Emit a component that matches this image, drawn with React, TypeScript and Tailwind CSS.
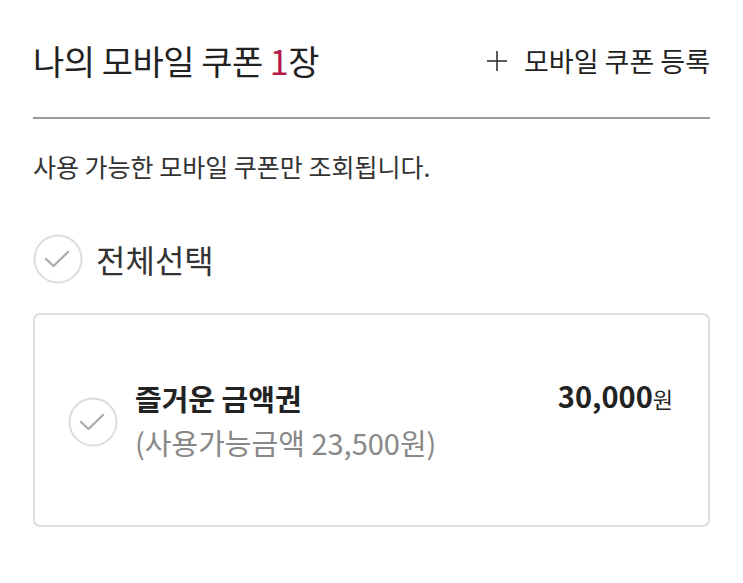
import React from "react";

const font = { fontFamily: '"Noto Sans CJK KR", "Noto Sans", sans-serif' };

function CheckCircle() {
  return (
    <svg width="50" height="50" viewBox="0 0 50 50" className="shrink-0">
      <circle cx="25" cy="25" r="23.5" fill="white" stroke="#dddddd" strokeWidth="2" />
      <polyline points="13,25 20.5,32 35,18" fill="none" stroke="#aaaaaa" strokeWidth="2.2" strokeLinecap="round" strokeLinejoin="round" />
    </svg>
  );
}

export default function App() {
  return (
    <div className="w-[743px] h-[583px] bg-white px-[33px] overflow-hidden" style={font}>
      <div className="mt-[42px] h-[38px] flex items-center justify-between">
        <div className="text-[34px] leading-[38px] text-[#222] tracking-[-0.5px] whitespace-nowrap">
          나의 모바일 쿠폰 <span className="text-[#b8174a]">1</span>장
        </div>
        <div className="flex items-center text-[27px] leading-[38px] text-[#222] whitespace-nowrap">
          <svg width="22" height="22" viewBox="0 0 22 22" className="mr-[16px]">
            <line x1="11" y1="1" x2="11" y2="21" stroke="#333" strokeWidth="1.6" />
            <line x1="1" y1="11" x2="21" y2="11" stroke="#333" strokeWidth="1.6" />
          </svg>
          모바일 쿠폰 등록
        </div>
      </div>
      <div className="mt-[37px] h-[2px] bg-[#9a9a9a]" />
      <div className="mt-[32px] text-[25px] leading-[30px] text-[#333] whitespace-nowrap">
        사용 가능한 모바일 쿠폰만 조회됩니다.
      </div>
      <div className="mt-[53px] flex items-center gap-[13px]">
        <CheckCircle />
        <span className="text-[32px] leading-[40px] text-[#333]">전체선택</span>
      </div>
      <div className="mt-[29px] h-[214px] border-2 border-[#dddddd] rounded-[7px] flex items-center pl-[33px] pr-[35px]">
        <div className="mt-[4px]">
          <CheckCircle />
        </div>
        <div className="ml-[17px] flex-1 flex flex-col">
          <div className="flex items-center justify-between h-[40px]">
            <span className="text-[29px] font-bold text-[#222] leading-[40px]">즐거운 금액권</span>
            <span className="text-[#222] leading-[40px]">
              <span className="text-[29px] font-bold">30,000</span>
              <span className="text-[22px]">원</span>
            </span>
          </div>
          <div className="mt-[4px] text-[29px] leading-[40px] text-[#888]">(사용가능금액 23,500원)</div>
        </div>
      </div>
    </div>
  );
}
